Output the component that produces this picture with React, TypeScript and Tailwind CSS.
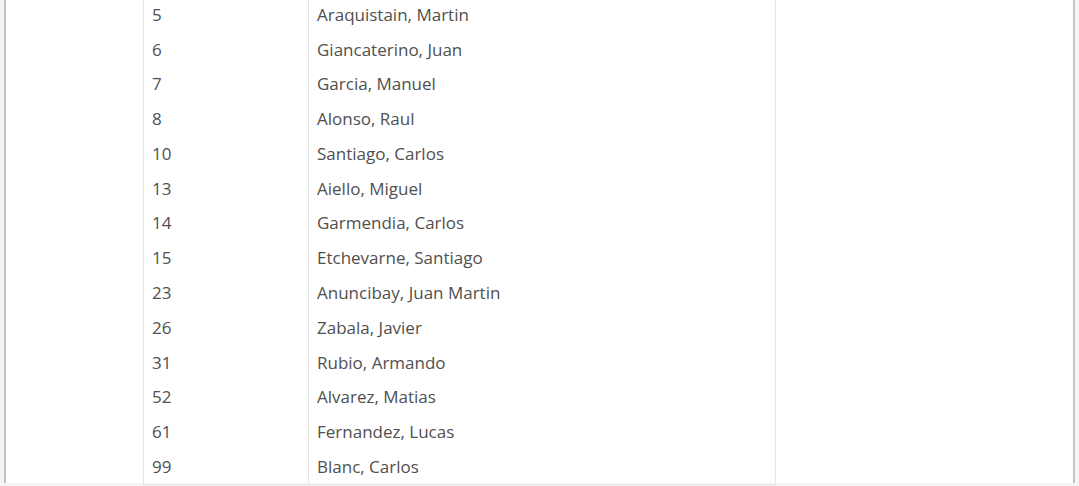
import React from 'react';

const players: [string, string][] = [
  ['5', 'Araquistain, Martin'],
  ['6', 'Giancaterino, Juan'],
  ['7', 'Garcia, Manuel'],
  ['8', 'Alonso, Raul'],
  ['10', 'Santiago, Carlos'],
  ['13', 'Aiello, Miguel'],
  ['14', 'Garmendia, Carlos'],
  ['15', 'Etchevarne, Santiago'],
  ['23', 'Anuncibay, Juan Martin'],
  ['26', 'Zabala, Javier'],
  ['31', 'Rubio, Armando'],
  ['52', 'Alvarez, Matias'],
  ['61', 'Fernandez, Lucas'],
  ['99', 'Blanc, Carlos'],
];

const App: React.FC = () => {
  return (
    <div className="h-[486px] w-[1079px] overflow-hidden bg-[#f5f5f5] font-['Open_Sans',sans-serif]">
      <div className="ml-[4px] h-full w-[1071px] border-x-2 border-[#c4c4c4] bg-white">
        <div className="ml-[137px] mt-[-3px] w-[633px] border-x border-b border-[#e6e6e6]">
          {players.map(([num, name]) => (
            <div key={num} className="flex h-[34.77px] items-center text-[17px] leading-none text-[#505050]">
              <div className="w-[164px] pl-[8px]">{num}</div>
              <div className="flex flex-1 items-center self-stretch border-l border-[#e6e6e6] pl-[8px]">
                {name}
              </div>
            </div>
          ))}
        </div>
      </div>
    </div>
  );
};

export default App;
